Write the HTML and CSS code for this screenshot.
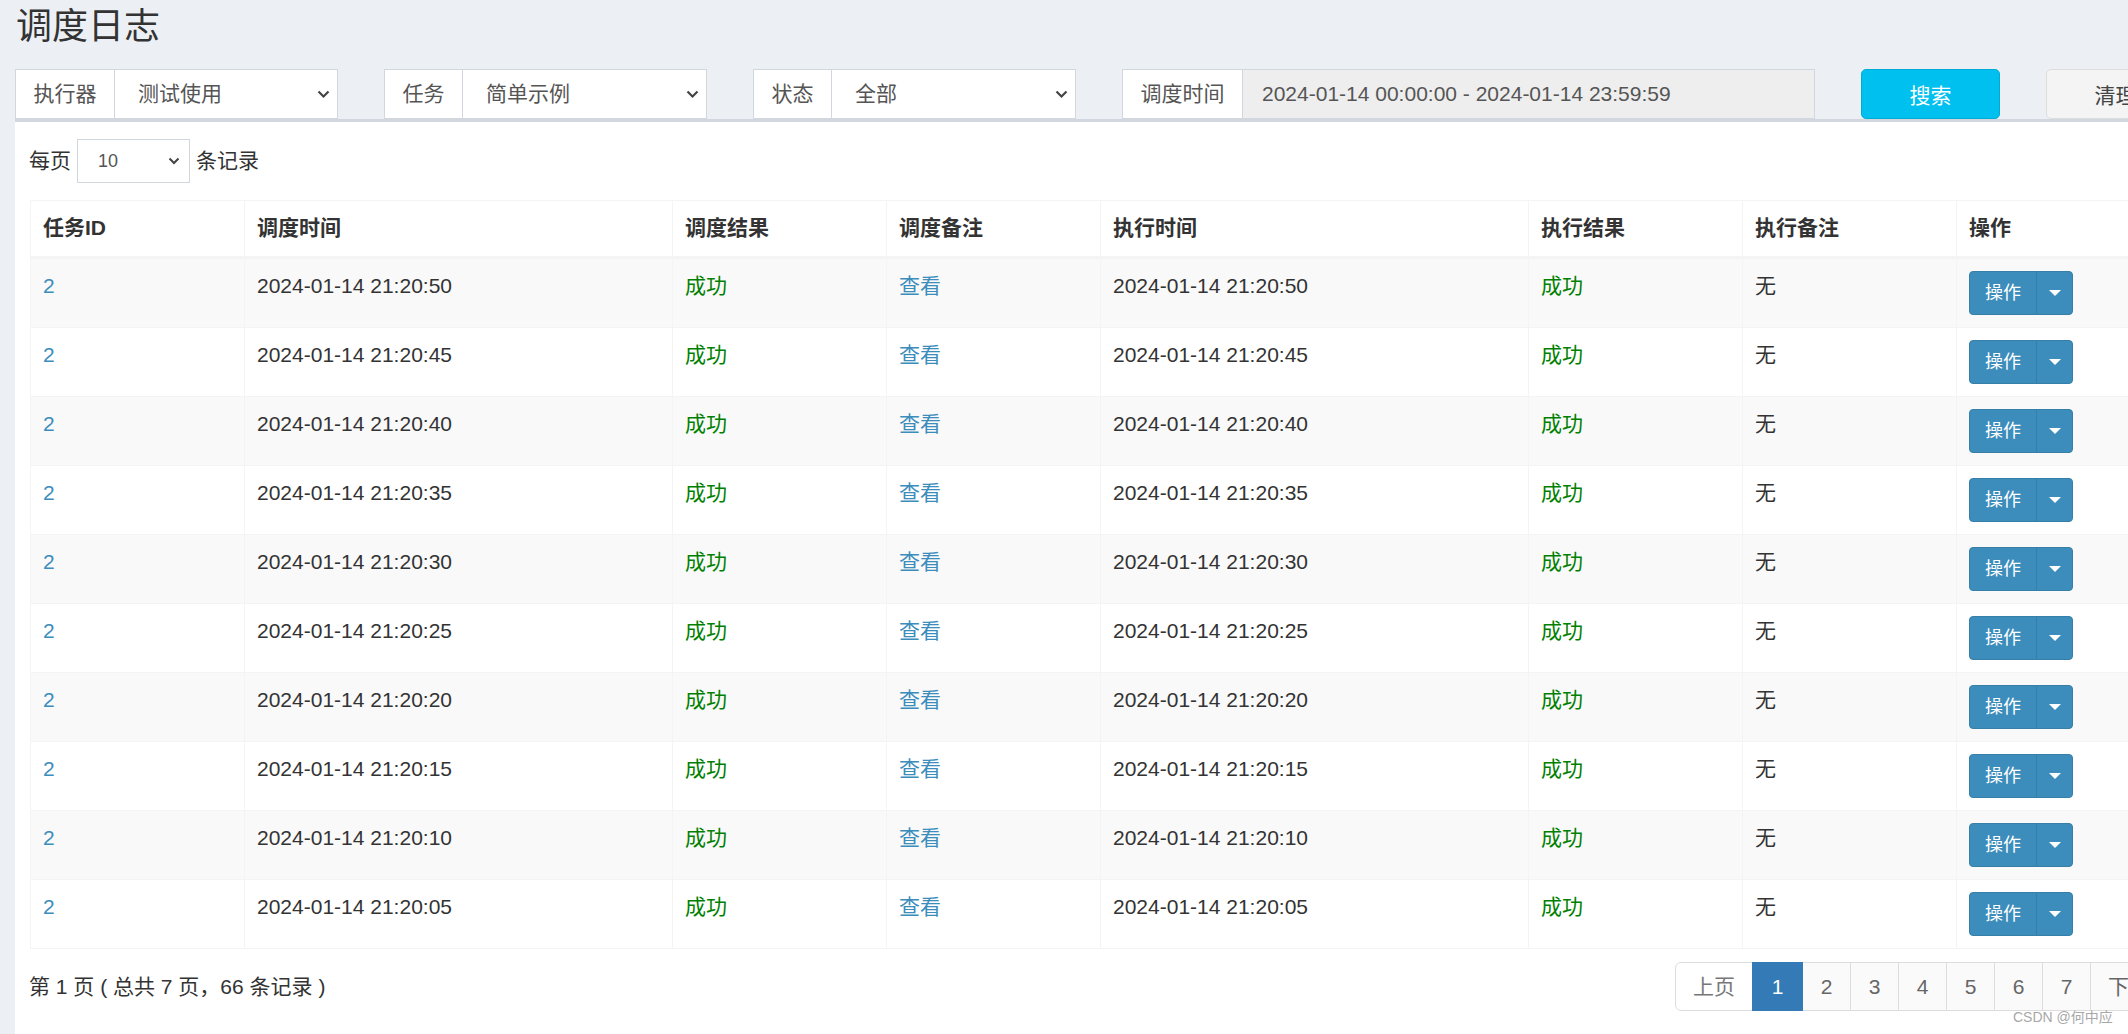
FILE: index.html
```html
<!DOCTYPE html>
<html lang="zh-CN">
<head>
<meta charset="utf-8">
<title>调度日志</title>
<link rel="stylesheet" href="styles.css">
</head>
<body>
<div class="page">
  <h1 class="title">调度日志</h1>
  <div class="filters">
    <div class="igroup">
      <span class="addon w100">执行器</span>
      <div class="sel"><span>测试使用</span><svg class="chev" width="13" height="9" viewBox="0 0 13 9"><polyline points="1.5,1.5 6.5,6.5 11.5,1.5" fill="none" stroke="#444" stroke-width="2.2"/></svg></div>
    </div>
    <div class="igroup">
      <span class="addon w79">任务</span>
      <div class="sel"><span>简单示例</span><svg class="chev" width="13" height="9" viewBox="0 0 13 9"><polyline points="1.5,1.5 6.5,6.5 11.5,1.5" fill="none" stroke="#444" stroke-width="2.2"/></svg></div>
    </div>
    <div class="igroup">
      <span class="addon w79">状态</span>
      <div class="sel"><span>全部</span><svg class="chev" width="13" height="9" viewBox="0 0 13 9"><polyline points="1.5,1.5 6.5,6.5 11.5,1.5" fill="none" stroke="#444" stroke-width="2.2"/></svg></div>
    </div>
    <div class="igroup wide">
      <span class="addon w121">调度时间</span>
      <div class="dateinput">2024-01-14 00:00:00 - 2024-01-14 23:59:59</div>
    </div>
    <button class="btn btn-search">搜索</button>
    <button class="btn btn-clear">清理</button>
  </div>

  <div class="box">
    <div class="length">
      <span>每页</span>
      <div class="lsel"><span>10</span><svg class="chev" width="12" height="8" viewBox="0 0 12 8"><polyline points="1.5,1.5 6,6 10.5,1.5" fill="none" stroke="#444" stroke-width="2"/></svg></div>
      <span>条记录</span>
    </div>

    <table class="grid">
      <colgroup>
        <col class="c1"><col class="c2"><col class="c1"><col class="c1"><col class="c2"><col class="c1"><col class="c1"><col class="c1">
      </colgroup>
      <thead>
        <tr><th>任务ID</th><th>调度时间</th><th>调度结果</th><th>调度备注</th><th>执行时间</th><th>执行结果</th><th>执行备注</th><th>操作</th></tr>
      </thead>
      <tbody>
        <tr><td><a class="lnk">2</a></td><td>2024-01-14 21:20:50</td><td class="ok">成功</td><td><a class="lnk">查看</a></td><td>2024-01-14 21:20:50</td><td class="ok">成功</td><td>无</td><td><div class="bgrp"><span class="bmain">操作</span><span class="bcaret"><i></i></span></div></td></tr>
        <tr><td><a class="lnk">2</a></td><td>2024-01-14 21:20:45</td><td class="ok">成功</td><td><a class="lnk">查看</a></td><td>2024-01-14 21:20:45</td><td class="ok">成功</td><td>无</td><td><div class="bgrp"><span class="bmain">操作</span><span class="bcaret"><i></i></span></div></td></tr>
        <tr><td><a class="lnk">2</a></td><td>2024-01-14 21:20:40</td><td class="ok">成功</td><td><a class="lnk">查看</a></td><td>2024-01-14 21:20:40</td><td class="ok">成功</td><td>无</td><td><div class="bgrp"><span class="bmain">操作</span><span class="bcaret"><i></i></span></div></td></tr>
        <tr><td><a class="lnk">2</a></td><td>2024-01-14 21:20:35</td><td class="ok">成功</td><td><a class="lnk">查看</a></td><td>2024-01-14 21:20:35</td><td class="ok">成功</td><td>无</td><td><div class="bgrp"><span class="bmain">操作</span><span class="bcaret"><i></i></span></div></td></tr>
        <tr><td><a class="lnk">2</a></td><td>2024-01-14 21:20:30</td><td class="ok">成功</td><td><a class="lnk">查看</a></td><td>2024-01-14 21:20:30</td><td class="ok">成功</td><td>无</td><td><div class="bgrp"><span class="bmain">操作</span><span class="bcaret"><i></i></span></div></td></tr>
        <tr><td><a class="lnk">2</a></td><td>2024-01-14 21:20:25</td><td class="ok">成功</td><td><a class="lnk">查看</a></td><td>2024-01-14 21:20:25</td><td class="ok">成功</td><td>无</td><td><div class="bgrp"><span class="bmain">操作</span><span class="bcaret"><i></i></span></div></td></tr>
        <tr><td><a class="lnk">2</a></td><td>2024-01-14 21:20:20</td><td class="ok">成功</td><td><a class="lnk">查看</a></td><td>2024-01-14 21:20:20</td><td class="ok">成功</td><td>无</td><td><div class="bgrp"><span class="bmain">操作</span><span class="bcaret"><i></i></span></div></td></tr>
        <tr><td><a class="lnk">2</a></td><td>2024-01-14 21:20:15</td><td class="ok">成功</td><td><a class="lnk">查看</a></td><td>2024-01-14 21:20:15</td><td class="ok">成功</td><td>无</td><td><div class="bgrp"><span class="bmain">操作</span><span class="bcaret"><i></i></span></div></td></tr>
        <tr><td><a class="lnk">2</a></td><td>2024-01-14 21:20:10</td><td class="ok">成功</td><td><a class="lnk">查看</a></td><td>2024-01-14 21:20:10</td><td class="ok">成功</td><td>无</td><td><div class="bgrp"><span class="bmain">操作</span><span class="bcaret"><i></i></span></div></td></tr>
        <tr><td><a class="lnk">2</a></td><td>2024-01-14 21:20:05</td><td class="ok">成功</td><td><a class="lnk">查看</a></td><td>2024-01-14 21:20:05</td><td class="ok">成功</td><td>无</td><td><div class="bgrp"><span class="bmain">操作</span><span class="bcaret"><i></i></span></div></td></tr>
      </tbody>
    </table>

    <div class="foot">
      <div class="info">第 1 页 ( 总共 7 页，66 条记录 )</div>
      <ul class="pager">
        <li class="disabled wtext">上页</li>
        <li class="active">1</li>
        <li>2</li>
        <li>3</li>
        <li>4</li>
        <li>5</li>
        <li>6</li>
        <li>7</li>
        <li class="wtext">下页</li>
      </ul>
    </div>
  </div>
  <div class="watermark">CSDN @何中应</div>
</div>
</body>
</html>
```

FILE: styles.css
```css
html, body {
  margin: 0;
  padding: 0;
  width: 2128px;
  height: 1034px;
  overflow: hidden;
  background: #ecf0f5;
}

body {
  font-family: "Liberation Sans", "Noto Sans CJK SC", sans-serif;
  font-size: 21px;
  line-height: 30px;
  color: #333;
}

.page {
  position: relative;
  width: 2200px;
  height: 1034px;
  padding-left: 15px;
  box-sizing: border-box;
}

.title {
  margin: 0;
  padding: 7px 0 0 1px;
  font-size: 36px;
  line-height: 40px;
  font-weight: 400;
  color: #333;
}

.filters {
  display: flex;
  gap: 46px;
  margin-top: 22px;
  height: 50px;
}

.igroup {
  display: flex;
  width: 323px;
  height: 50px;
  flex: none;
}

.igroup.wide {
  width: 693px;
}

.addon {
  box-sizing: border-box;
  border: 1px solid #d2d6de;
  background: #fff;
  color: #555;
  display: flex;
  align-items: center;
  justify-content: center;
  flex: none;
}

.w100 { width: 100px; }
.w79 { width: 79px; }
.w121 { width: 121px; }

.sel {
  flex: 1;
  box-sizing: border-box;
  border: 1px solid #d2d6de;
  border-left: 0;
  background: #fff;
  color: #555;
  display: flex;
  align-items: center;
  justify-content: space-between;
  padding: 0 7px 0 23px;
}

.chev {
  display: block;
  flex: none;
}

.dateinput {
  flex: 1;
  box-sizing: border-box;
  border: 1px solid #d2d6de;
  border-left: 0;
  background: #eee;
  color: #555;
  display: flex;
  align-items: center;
  padding-left: 19px;
}

.btn {
  flex: none;
  width: 139px;
  height: 50px;
  box-sizing: border-box;
  border-radius: 5px;
  font-family: inherit;
  font-size: 21px;
  padding: 0;
  cursor: pointer;
}

.btn-search {
  background: #00c0ef;
  border: 1px solid #00acd6;
  color: #fff;
}

.btn-clear {
  background: #f4f4f4;
  border: 1px solid #ddd;
  color: #444;
}

.box {
  width: 2170px;
  height: 915px;
  box-sizing: border-box;
  background: #fff;
  border-top: 3px solid #d2d6de;
  padding: 17px 15px 0 15px;
}

.length {
  display: flex;
  align-items: center;
  height: 44px;
  gap: 6px;
  margin-left: -1px;
}

.lsel {
  width: 113px;
  height: 44px;
  box-sizing: border-box;
  border: 1px solid #d2d6de;
  display: flex;
  align-items: center;
  justify-content: space-between;
  padding: 0 9px 0 20px;
  font-size: 18px;
  color: #555;
}

.grid {
  margin-top: 17px;
  width: 2140px;
  border-collapse: collapse;
  table-layout: fixed;
  border: 1px solid #f4f4f4;
}

.c1 { width: 214px; }
.c2 { width: 428px; }

.grid th,
.grid td {
  border: 1px solid #f4f4f4;
  padding: 12px;
  text-align: left;
  vertical-align: top;
  line-height: 30px;
  white-space: nowrap;
}

.grid th {
  font-weight: 700;
  padding-bottom: 13px;
  border-bottom: 3px solid #f4f4f4;
}

.grid tbody tr:nth-child(odd) td {
  background: #f9f9f9;
}

.lnk {
  color: #3c8dbc;
  text-decoration: none;
}

.ok {
  color: green;
}

.bgrp {
  display: inline-flex;
  height: 44px;
  border-radius: 4px;
  overflow: hidden;
  background: #3c8dbc;
  border: 1px solid #367fa9;
  box-sizing: border-box;
}

.bmain {
  display: flex;
  align-items: center;
  padding: 0 15px;
  color: #fff;
  font-size: 18px;
  border-right: 1px solid #367fa9;
}

.bcaret {
  width: 35px;
  display: flex;
  align-items: center;
  justify-content: center;
}

.bcaret i {
  display: block;
  width: 0;
  height: 0;
  border-left: 6px solid transparent;
  border-right: 6px solid transparent;
  border-top: 6px solid #fff;
}

.foot {
  display: flex;
  align-items: center;
  margin-top: 13px;
}

.info {
  color: #333;
  margin-left: -1px;
  flex: 1;
}

.pager {
  list-style: none;
  margin: 0 2px 0 0;
  padding: 0;
  display: flex;
}

.pager li {
  width: 49px;
  height: 49px;
  box-sizing: border-box;
  display: flex;
  align-items: center;
  justify-content: center;
  border: 1px solid #ddd;
  margin-left: -1px;
  background: #fafafa;
  color: #666;
}

.pager li.wtext {
  width: 78px;
}

.pager li:first-child {
  border-radius: 6px 0 0 6px;
  margin-left: 0;
}

.pager li:last-child {
  border-radius: 0 6px 6px 0;
}

.pager li.disabled {
  background: #fff;
  color: #777;
}

.pager li.active {
  width: 51px;
  background: #337ab7;
  border-color: #337ab7;
  color: #fff;
  position: relative;
}

.watermark {
  position: absolute;
  left: 2013px;
  top: 1007px;
  font-size: 14px;
  line-height: 20px;
  color: #a8a8a8;
  white-space: nowrap;
}
```
